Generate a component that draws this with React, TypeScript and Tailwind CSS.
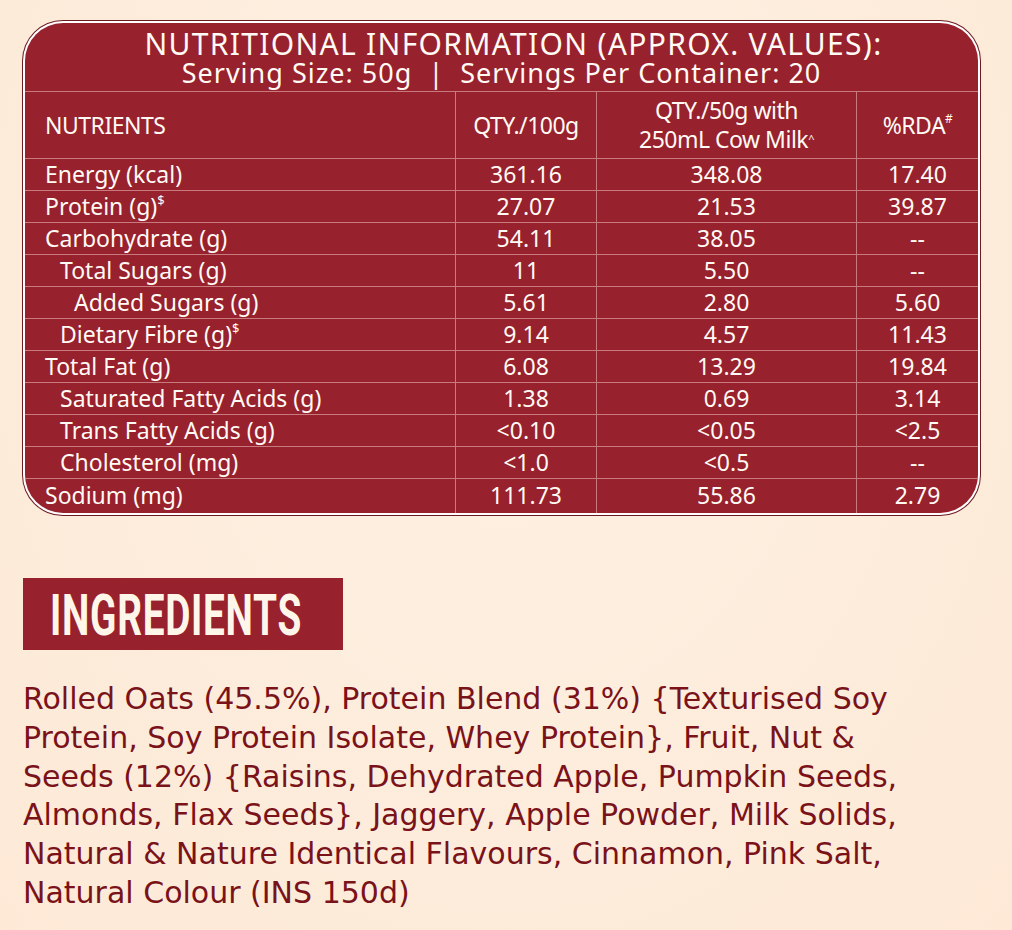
import React from 'react';

type Row = { name: string; sup?: string; indent: 0 | 1 | 2; q100: string; q50: string; rda: string };

const rows: Row[] = [
  { name: 'Energy (kcal)', indent: 0, q100: '361.16', q50: '348.08', rda: '17.40' },
  { name: 'Protein (g)', sup: '$', indent: 0, q100: '27.07', q50: '21.53', rda: '39.87' },
  { name: 'Carbohydrate (g)', indent: 0, q100: '54.11', q50: '38.05', rda: '--' },
  { name: 'Total Sugars (g)', indent: 1, q100: '11', q50: '5.50', rda: '--' },
  { name: 'Added Sugars (g)', indent: 2, q100: '5.61', q50: '2.80', rda: '5.60' },
  { name: 'Dietary Fibre (g)', sup: '$', indent: 1, q100: '9.14', q50: '4.57', rda: '11.43' },
  { name: 'Total Fat (g)', indent: 0, q100: '6.08', q50: '13.29', rda: '19.84' },
  { name: 'Saturated Fatty Acids (g)', indent: 1, q100: '1.38', q50: '0.69', rda: '3.14' },
  { name: 'Trans Fatty Acids (g)', indent: 1, q100: '<0.10', q50: '<0.05', rda: '<2.5' },
  { name: 'Cholesterol (mg)', indent: 1, q100: '<1.0', q50: '<0.5', rda: '--' },
  { name: 'Sodium (mg)', indent: 0, q100: '111.73', q50: '55.86', rda: '2.79' },
];

const indentClass = ['pl-5', 'pl-[35px]', 'pl-[49px]'];

const cell = 'flex items-center justify-center border-t border-l border-[#c97a7e] h-8';

const ingredients = [
  'Rolled Oats (45.5%), Protein Blend (31%) {Texturised Soy',
  'Protein, Soy Protein Isolate, Whey Protein}, Fruit, Nut &',
  'Seeds (12%) {Raisins, Dehydrated Apple, Pumpkin Seeds,',
  'Almonds, Flax Seeds}, Jaggery, Apple Powder, Milk Solids,',
  'Natural & Nature Identical Flavours, Cinnamon, Pink Salt,',
  'Natural Colour (INS 150d)',
];

export default function App() {
  return (
    <div className="min-h-[930px] w-[1012px] bg-[radial-gradient(ellipse_at_50%_30%,#fdf1e4,#fde9d6)] pt-[21px] pl-[23px] font-['Noto_Sans',sans-serif]">
      {/* Tabela nutricional */}
      <div className="w-[957px] rounded-[40px] bg-white p-[2px] shadow-[0_0_0_1px_#6e1a22]">
        <div className="overflow-hidden rounded-[38px] bg-[#97212d] text-[#fffaf4]">
          <div className="flex h-[68px] flex-col items-center justify-center pt-[1px]">
            <div className="pl-[24px] text-[30px] leading-[30px] tracking-[1.3px]">NUTRITIONAL INFORMATION (APPROX. VALUES):</div>
            <div className="text-[27px] leading-[28px] tracking-[1px]">Serving Size: 50g&nbsp; |&nbsp; Servings Per Container: 20</div>
          </div>
          <div className="grid grid-cols-[430px_141px_260px_1fr] text-[23px]">
            <div className="flex h-[67px] items-center border-t border-[#c97a7e] pl-5 tracking-[-0.5px]">NUTRIENTS</div>
            <div className={cell + ' h-[67px] tracking-[-0.5px]'}>QTY./100g</div>
            <div className={cell + ' h-[67px] flex-col leading-[29px] tracking-[-0.5px]'}>
              <span>QTY./50g with</span>
              <span>
                250mL Cow Milk<sup className="text-[11px]">^</sup>
              </span>
            </div>
            <div className={cell + ' h-[67px] tracking-[-0.5px]'}>
              %RDA<sup className="text-[12px]">#</sup>
            </div>
            {rows.map((r, i) => {
              const h = i === rows.length - 1 ? ' h-[35px] pb-[2px]' : '';
              return (
                <React.Fragment key={r.name}>
                  <div className={'flex h-8 items-center border-t border-[#c97a7e] ' + indentClass[r.indent] + h}>
                    {r.name}
                    {r.sup && <span className="mb-3 text-[13px] leading-none">{r.sup}</span>}
                  </div>
                  <div className={cell + h}>{r.q100}</div>
                  <div className={cell + h}>{r.q50}</div>
                  <div className={cell + h}>{r.rda}</div>
                </React.Fragment>
              );
            })}
          </div>
        </div>
      </div>

      {/* Ingredientes */}
      <div className="mt-[63px] flex h-[72px] w-[320px] items-center overflow-hidden bg-[#97212d] pl-[27px]">
        <span className="inline-block origin-left scale-x-[0.68] whitespace-nowrap pt-[2px] font-['Roboto',sans-serif] text-[57px] font-bold leading-none tracking-[1px] text-[#fff6ea]">
          INGREDIENTS
        </span>
      </div>
      <div className="mt-[30px] font-['DejaVu_Sans',sans-serif] text-[30px] leading-[38.8px] text-[#7a1219]">
        {ingredients.map((l) => (
          <div key={l} className="whitespace-nowrap">
            {l}
          </div>
        ))}
      </div>
    </div>
  );
}
